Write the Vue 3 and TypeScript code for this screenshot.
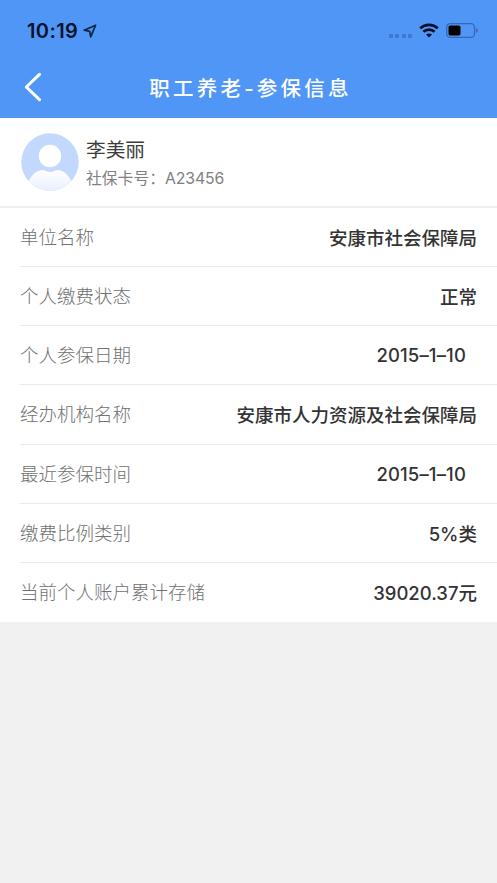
<template>
  <div class="page">
    <header class="header">
      <div class="status">
        <div class="status__left">
          <span class="status__time">10:19</span>
          <svg class="status__location" width="14" height="14" viewBox="0 0 14 14">
            <path d="M12.6 1.200 1.200 6.200l5.500 1.100 1 5.500z" />
          </svg>
        </div>
        <div class="status__right">
          <div class="status__signal">
            <i v-for="n in 4" :key="n"></i>
          </div>
          <svg class="status__wifi" width="20" height="15" viewBox="0 0 20 15">
            <path d="M1.200 5.300C6.200.6 13.800.6 18.800 5.300" />
            <path d="M4.400 8.700c3.200-2.900 8-2.900 11.200 0" />
            <path class="status__wifi-dot" d="M7 11.500c1.700-1.500 4.300-1.500 6 0l-3 3z" />
          </svg>
          <svg class="status__battery" width="33" height="15" viewBox="0 0 33 15">
            <rect class="status__battery-case" x=".7" y=".7" width="27.800" height="13.600" rx="3.600" />
            <rect x="2.500" y="2.500" width="12" height="10" rx="1.800" />
            <path class="status__battery-cap" d="M30 5c2.300.8 2.300 4.200 0 5z" />
          </svg>
        </div>
      </div>
      <div class="nav">
        <button class="nav__back" aria-label="返回">
          <svg width="18" height="30" viewBox="0 0 18 30">
            <path d="M15.500 2.300 2.300 15l13.200 12.700" />
          </svg>
        </button>
        <h1 class="nav__title">职工养老-参保信息</h1>
      </div>
    </header>

    <section class="profile">
      <svg class="profile__avatar" width="58" height="58" viewBox="0 0 58 58">
        <defs>
          <clipPath id="avatar-clip">
            <circle cx="29" cy="29" r="28.700" />
          </clipPath>
          <linearGradient id="avatar-body" x1="0" y1="0" x2="0" y2="1">
            <stop offset="0" stop-color="#fff" />
            <stop offset="1" stop-color="#e6eeff" />
          </linearGradient>
        </defs>
        <g clip-path="url(#avatar-clip)">
          <rect width="58" height="58" fill="#c2d8fd" />
          <path
            d="M6 52C9 44 14 37.500 21 37c3.500 0 4.500 2 8 2s4.500-2 8-2c7 .5 12 7 15 15v7H6z"
            fill="url(#avatar-body)"
          />
          <circle cx="29" cy="23" r="11.200" fill="#fff" />
        </g>
      </svg>
      <div class="profile__text">
        <div class="profile__name">{{ name }}</div>
        <div class="profile__card">社保卡号：<span>{{ cardNumber }}</span></div>
      </div>
    </section>

    <ul class="info">
      <li v-for="item in items" :key="item.label" class="info__row">
        <span class="info__label">{{ item.label }}</span>
        <span class="info__value" :class="{ info__value_date: item.isDate }">{{ item.value }}</span>
      </li>
    </ul>
  </div>
</template>

<script setup lang="ts">
interface InfoItem {
  label: string;
  value: string;
  isDate?: boolean;
}

const name = "李美丽";
const cardNumber = "A23456";

const items: InfoItem[] = [
  { label: "单位名称", value: "安康市社会保障局" },
  { label: "个人缴费状态", value: "正常" },
  { label: "个人参保日期", value: "2015–1–10", isDate: true },
  { label: "经办机构名称", value: "安康市人力资源及社会保障局" },
  { label: "最近参保时间", value: "2015–1–10", isDate: true },
  { label: "缴费比例类别", value: "5%类" },
  { label: "当前个人账户累计存储", value: "39020.37元" },
];
</script>

<style>
body {
  background: #f1f1f1;
}
</style>

<style scoped>
.page {
  min-height: 883px;
  background: #f1f1f1;
  font-family: Inter, "Noto Sans CJK SC", sans-serif;
}

.header {
  height: 118px;
  background: #5096f6;
}

.status {
  display: flex;
  justify-content: space-between;
  height: 58px;
  padding: 0 18px 0 27px;
}

.status__left,
.status__right {
  display: flex;
  align-items: center;
  height: 61px;
}

.status__time {
  font-size: 20px;
  font-weight: 600;
  letter-spacing: 0.4px;
  color: #081228;
}

.status__location {
  margin-left: 5px;
  fill: none;
  stroke: #10244a;
  stroke-width: 1.7;
  stroke-linejoin: round;
}

.status__signal {
  display: flex;
  gap: 2.4px;
  margin: 10px 7px 0 0;
}

.status__signal i {
  width: 4px;
  height: 4px;
  border-radius: 1px;
  background: #4079c9;
}

.status__wifi {
  margin-right: 7px;
  fill: none;
  stroke: #061027;
  stroke-width: 2.7;
}

.status__wifi-dot {
  fill: #061027;
  stroke: none;
}

.status__battery-case {
  fill: none;
  stroke: #3669b1;
  stroke-width: 1.3;
}

.status__battery-cap {
  fill: #3669b1;
}

.nav {
  display: grid;
  grid-template-columns: 60px 1fr 60px;
  align-items: center;
  height: 58px;
}

.nav__back {
  display: flex;
  padding: 0 0 0 24px;
  border: none;
  background: none;
  cursor: pointer;
}

.nav__back svg {
  fill: none;
  stroke: #fff;
  stroke-width: 3;
  stroke-linecap: round;
  stroke-linejoin: round;
}

.nav__title {
  margin: 0;
  padding-left: 4px;
  font-size: 20.5px;
  font-weight: 500;
  letter-spacing: 3.2px;
  text-align: center;
  white-space: nowrap;
  color: #fff;
}

.profile {
  display: flex;
  box-sizing: border-box;
  height: 90px;
  padding: 15px 21px 0;
  border-bottom: 2px solid #efefef;
  background: #fff;
}

.profile__text {
  margin: 2px 0 0 7px;
}

.profile__name {
  font-size: 19.7px;
  line-height: 30px;
  color: #3c3c3c;
}

.profile__card {
  font-size: 15.8px;
  line-height: 27px;
  color: #808080;
}

.profile__card span {
  letter-spacing: -0.1px;
}

.info {
  margin: 0;
  padding: 0;
  list-style: none;
  background: #fff;
}

.info__row {
  display: flex;
  justify-content: space-between;
  align-items: center;
  box-sizing: border-box;
  height: 59.15px;
  margin-left: 20px;
  padding-right: 20px;
  border-bottom: 1px solid #e9e9e9;
}

.info__row:last-child {
  border-bottom: none;
}

.info__label {
  padding-bottom: 2px;
  font-size: 18.5px;
  font-weight: 300;
  color: #707070;
}

.info__value {
  font-size: 18.5px;
  font-weight: 500;
  color: #333;
}

.info__value_date {
  margin-right: 11px;
  letter-spacing: 0.15px;
}
</style>
